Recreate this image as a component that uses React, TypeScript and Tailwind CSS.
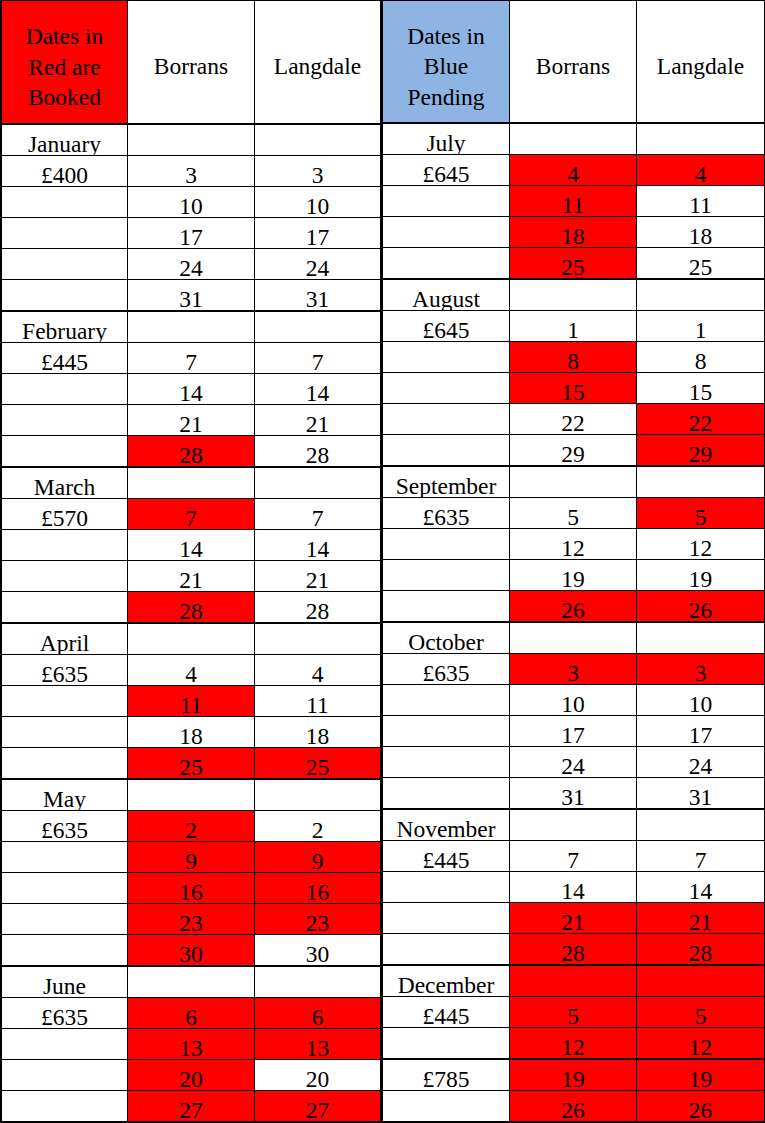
type Row = {
  label?: string;
  b?: string;
  l?: string;
  rb?: boolean;
  rl?: boolean;
  end?: boolean;
};

// builds one month block: name row, then the dates, price next to the first date
function month(
  name: string,
  price: string,
  dates: number[],
  redB: number[],
  redL: number[]
): Row[] {
  const rows: Row[] = [{ label: name }];
  dates.forEach((d, i) => {
    rows.push({
      label: i === 0 ? price : undefined,
      b: String(d),
      l: String(d),
      rb: redB.includes(d),
      rl: redL.includes(d),
    });
  });
  rows[rows.length - 1].end = true;
  return rows;
}

const leftRows: Row[] = [
  ...month("January", "£400", [3, 10, 17, 24, 31], [], []),
  ...month("February", "£445", [7, 14, 21, 28], [28], []),
  ...month("March", "£570", [7, 14, 21, 28], [7, 28], []),
  ...month("April", "£635", [4, 11, 18, 25], [11, 25], [25]),
  ...month("May", "£635", [2, 9, 16, 23, 30], [2, 9, 16, 23, 30], [9, 16, 23]),
  ...month("June", "£635", [6, 13, 20, 27], [6, 13, 20, 27], [6, 13, 27]),
];

const rightRows: Row[] = [
  ...month("July", "£645", [4, 11, 18, 25], [4, 11, 18, 25], [4]),
  ...month("August", "£645", [1, 8, 15, 22, 29], [8, 15], [22, 29]),
  ...month("September", "£635", [5, 12, 19, 26], [26], [5, 26]),
  ...month("October", "£635", [3, 10, 17, 24, 31], [3], [3]),
  ...month("November", "£445", [7, 14, 21, 28], [21, 28], [21, 28]),
  { label: "December", rb: true, rl: true },
  { label: "£445", b: "5", l: "5", rb: true, rl: true },
  { label: undefined, b: "12", l: "12", rb: true, rl: true, end: true },
  { label: "£785", b: "19", l: "19", rb: true, rl: true },
  { label: undefined, b: "26", l: "26", rb: true, rl: true, end: true },
];

function Cell({
  text,
  red,
  className,
}: {
  text?: string;
  red?: boolean;
  className: string;
}) {
  return (
    <div
      className={`${className} ${
        red ? "bg-[#ff0000]" : "bg-white"
      } h-full border-black pt-[8px] text-center leading-[22px] whitespace-nowrap`}
    >
      {text}
    </div>
  );
}

function Table({
  rows,
  side,
  title,
}: {
  rows: Row[];
  side: "left" | "right";
  title: React.ReactNode;
}) {
  const isLeft = side === "left";
  const c1 = isLeft
    ? "w-[128px] border-l-2 border-r"
    : "w-[128px] border-l border-r";
  const c2 = "w-[127px] border-r";
  const c3 = isLeft ? "w-[127px] border-r-2" : "w-[128px] border-r";

  return (
    <div className="flex flex-col">
      {/* cabeçalho */}
      <div className="flex h-[125px] border-t border-b-2 border-black">
        <div
          className={`${c1} ${
            isLeft ? "bg-[#ff0000]" : "bg-[#8eb4e3]"
          } flex items-center justify-center border-black pt-[10px] text-center leading-[30.5px]`}
        >
          <div>{title}</div>
        </div>
        <div
          className={`${c2} flex items-center justify-center border-black bg-white pt-[10px]`}
        >
          Borrans
        </div>
        <div
          className={`${c3} flex items-center justify-center border-black bg-white pt-[10px]`}
        >
          Langdale
        </div>
      </div>

      {rows.map((r, i) => (
        <div
          key={i}
          className={`flex border-black ${
            r.end ? "h-[32px] border-b-2" : "h-[31px] border-b"
          }`}
        >
          <Cell text={r.label} className={c1} />
          <Cell text={r.b} red={r.rb} className={c2} />
          <Cell text={r.l} red={r.rl} className={c3} />
        </div>
      ))}
    </div>
  );
}

export default function App() {
  return (
    <div className="flex h-[1123px] w-[765px] overflow-hidden bg-white font-['Liberation_Serif',serif] text-[23.5px] text-black">
      <Table
        rows={leftRows}
        side="left"
        title={
          <>
            Dates in
            <br />
            Red are
            <br />
            Booked
          </>
        }
      />
      <Table
        rows={rightRows}
        side="right"
        title={
          <>
            Dates in
            <br />
            Blue
            <br />
            Pending
          </>
        }
      />
    </div>
  );
}
